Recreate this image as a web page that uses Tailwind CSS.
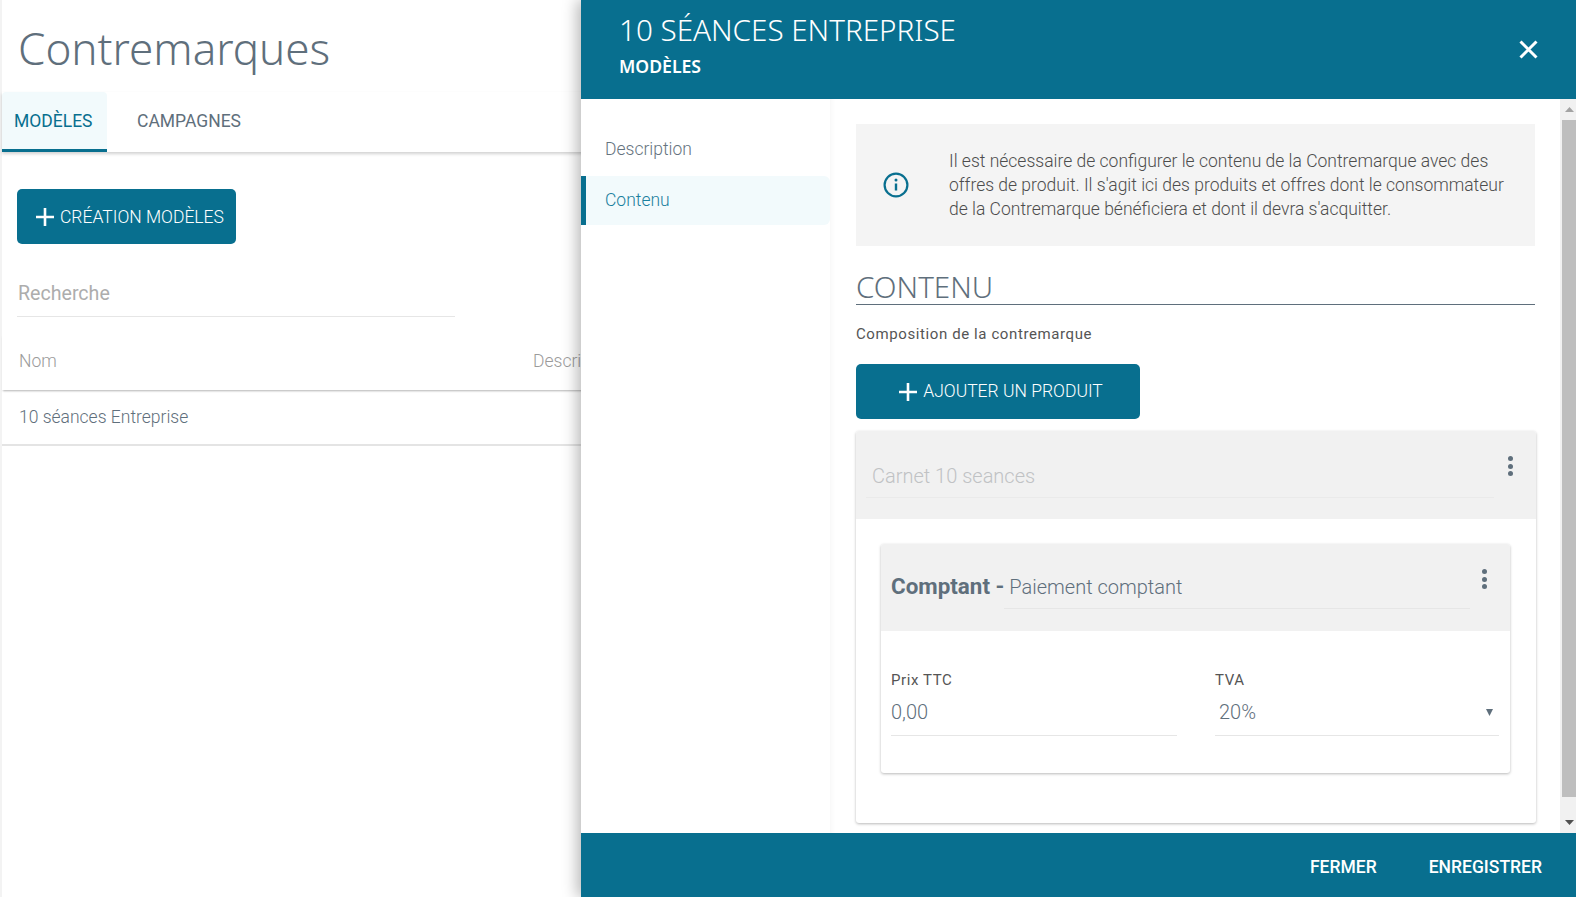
<!DOCTYPE html>
<html lang="fr">
<head>
<meta charset="utf-8"/>
<title>Contremarques</title>
<script src="https://cdn.jsdelivr.net/npm/@tailwindcss/browser@4"></script>
</head>
<body class="h-[897px] overflow-hidden bg-white font-['Roboto',sans-serif]">
<div class="relative h-[897px] w-[1576px] overflow-hidden bg-[#f3f3f3]">
  <!-- page behind the drawer -->
  <main class="ml-[2px] h-full bg-white">
    <h1 class="pl-[16px] pt-[19px] h-[92px] font-['Noto_Sans',sans-serif] font-light text-[44px] leading-[58px] text-[#5f6f7c]">Contremarques</h1>
    <nav class="flex h-[60px] shadow-[0_2px_3px_rgba(0,0,0,0.18)]">
      <a class="flex w-[105px] items-center rounded-t-[4px] border-b-[3px] border-[#086f8f] bg-[#f2fafc] pl-[12px] pt-[1px] text-[17.5px] text-[#086f8f]">MODÈLES</a>
      <a class="flex items-center border-b-[3px] border-transparent pl-[30px] pt-[1px] text-[17.5px] text-[#5f6f7c]">CAMPAGNES</a>
    </nav>
    <div class="pl-[15px] pt-[37px]">
      <button class="flex h-[55px] w-[219px] items-center gap-[6px] rounded-[5px] bg-[#086f8f] pl-[19px] pt-[1px] text-[17.5px] font-light text-white">
        <svg class="h-[18px] w-[18px]" viewBox="0 0 18 18"><path d="M9 0v18M0 9h18" stroke="white" stroke-width="2.6"/></svg>
        <span>CRÉATION MODÈLES</span>
      </button>
      <div class="mt-[33px] h-[40px] w-[438px] border-b border-[#e6e6e6] pl-[1px] pt-[2px] text-[19.6px] leading-[30px] text-[#adadad]">Recherche</div>
    </div>
    <div class="mt-[17px] flex h-[56px] items-center pl-[17px] pb-[1px] text-[17.5px] font-light text-[#9b9b9b] shadow-[0_2px_2px_-1px_rgba(0,0,0,0.3)]">
      <span class="w-[514px]">Nom</span><span>Description</span>
    </div>
    <div class="flex h-[56px] items-center border-b-2 border-[#e4e4e4] pl-[17px] pt-[1px] text-[17.5px] font-light text-[#5f6f7c]">10 séances Entreprise</div>
  </main>

  <!-- drawer -->
  <aside class="absolute inset-y-0 right-0 flex w-[995px] flex-col bg-white shadow-[-4px_0_14px_rgba(0,0,0,0.28)]">
    <header class="relative flex h-[99px] shrink-0 flex-col bg-[#086f8f] pl-[38px] pt-[10px] text-white">
      <div class="font-['Noto_Sans',sans-serif] font-light text-[29.6px] leading-[40px]">10 SÉANCES ENTREPRISE</div>
      <div class="mt-[5px] font-['Noto_Sans',sans-serif] text-[17.6px] font-semibold leading-[22px]">MODÈLES</div>
      <svg class="absolute right-[38px] top-[40px] h-[19px] w-[19px]" viewBox="0 0 19 19"><path d="M1.5 1.5l16 16M17.5 1.5l-16 16" stroke="white" stroke-width="3"/></svg>
    </header>
    <div class="flex min-h-0 flex-1">
      <nav class="w-[249px] shrink-0 pt-[24px] text-[17.5px] font-light">
        <a class="flex h-[53px] items-center pl-[24px] text-[#65737e]">Description</a>
        <a class="flex h-[49px] items-center rounded-r-[6px] border-l-[5px] border-[#086f8f] bg-[#f2fafc] pb-[1px] pl-[19px] text-[#1a7f9e]">Contenu</a>
      </nav>
      <div class="min-w-0 flex-1 pl-[26px] pr-[25px] pt-[25px] shadow-[inset_6px_0_6px_-6px_rgba(0,0,0,0.06)]">
        <div class="flex h-[122px] w-[679px] items-center bg-[#f4f4f4]">
          <svg class="ml-[27px] h-[26px] w-[26px] shrink-0" viewBox="0 0 26 26" fill="none"><circle cx="13" cy="13" r="11.4" stroke="#086f8f" stroke-width="2.2"/><path d="M13 11.5v7" stroke="#086f8f" stroke-width="2.4"/><circle cx="13" cy="8" r="1.5" fill="#086f8f"/></svg>
          <p class="ml-[40px] w-[565px] text-[17.5px] font-light leading-[24px] text-[#4d4d4d]">Il est nécessaire de configurer le contenu de la Contremarque avec des offres de produit. Il s'agit ici des produits et offres dont le consommateur de la Contremarque bénéficiera et dont il devra s'acquitter.</p>
        </div>
        <h2 class="mt-[23px] h-[36px] w-[679px] border-b border-[#5f6f7c] font-['Noto_Sans',sans-serif] font-light text-[29.6px] leading-[36px] text-[#5f6f7c]">CONTENU</h2>
        <p class="mt-[19px] text-[15px] leading-[20px] tracking-[0.6px] text-[#555]">Composition de la contremarque</p>
        <button class="mt-[20px] flex h-[55px] w-[284px] items-center justify-center gap-[6px] rounded-[5px] bg-[#086f8f] pl-[6px] text-[17.5px] font-light text-white">
          <svg class="h-[18px] w-[18px]" viewBox="0 0 18 18"><path d="M9 0v18M0 9h18" stroke="white" stroke-width="2.6"/></svg>
          <span>AJOUTER UN PRODUIT</span>
        </button>
        <section class="mt-[12px] h-[392px] w-[680px] rounded-[3px] bg-white shadow-[0_1px_3px_rgba(0,0,0,0.28)]">
          <div class="relative h-[88px] rounded-t-[3px] bg-[#f1f1f1] pl-[10px] pt-[25px]">
            <div class="h-[42px] w-[628px] border-b border-[#eaeaea] pl-[6px] pt-[4px] text-[20px] font-light leading-[32px] text-[#c0c2c4]">Carnet 10 seances</div>
            <div class="absolute right-[23px] top-[25px] flex flex-col gap-[2.5px]"><i class="h-[5px] w-[5px] rounded-full bg-[#5f6f7c]"></i><i class="h-[5px] w-[5px] rounded-full bg-[#5f6f7c]"></i><i class="h-[5px] w-[5px] rounded-full bg-[#5f6f7c]"></i></div>
          </div>
          <div class="ml-[25px] mt-[25px] h-[229px] w-[629px] rounded-[3px] bg-white shadow-[0_1px_3px_rgba(0,0,0,0.28)]">
            <div class="relative flex h-[87px] rounded-t-[3px] bg-[#f1f1f1] pl-[10px] pt-[24px]">
              <span class="pt-[2px] text-[22.4px] font-bold leading-[32px] text-[#5f6f7c]">Comptant -</span>
              <div class="h-[41px] w-[466px] border-b border-[#e6e6e6] pl-[5px] pt-[3px] text-[20px] font-light leading-[32px] text-[#5f6f7c]">Paiement comptant</div>
              <div class="absolute right-[23px] top-[25px] flex flex-col gap-[2.5px]"><i class="h-[5px] w-[5px] rounded-full bg-[#5f6f7c]"></i><i class="h-[5px] w-[5px] rounded-full bg-[#5f6f7c]"></i><i class="h-[5px] w-[5px] rounded-full bg-[#5f6f7c]"></i></div>
            </div>
            <div class="flex gap-[38px] pl-[10px] pt-[39px]">
              <div class="w-[286px]">
                <div class="text-[15px] leading-[20px] tracking-[0.6px] text-[#555]">Prix TTC</div>
                <div class="h-[46px] border-b border-[#e6e6e6] pt-[8px] text-[20px] font-light leading-[28px] text-[#5f6f7c]">0,00</div>
              </div>
              <div class="w-[284px]">
                <div class="text-[15px] leading-[20px] tracking-[0.6px] text-[#555]">TVA</div>
                <div class="relative h-[46px] border-b border-[#e6e6e6] pl-[4px] pt-[8px] text-[20px] font-light leading-[28px] text-[#5f6f7c]">20%<svg class="absolute right-[6px] top-[19px] h-[7px] w-[7px]" viewBox="0 0 7 7"><path d="M0 0h7L3.5 7z" fill="#5f6f7c"/></svg></div>
              </div>
            </div>
          </div>
        </section>
      </div>
      <!-- scrollbar -->
      <div class="relative w-[16px] shrink-0 bg-[#f1f1f1]">
        <svg class="absolute left-[5px] top-[8px] h-[5px] w-[9px]" viewBox="0 0 9 5"><path d="M4.5 0L9 5H0z" fill="#a3a3a3"/></svg>
        <div class="ml-[2px] mt-[21px] h-[677px] bg-[#bebebe]"></div>
        <svg class="absolute bottom-[8px] left-[5px] h-[5px] w-[9px]" viewBox="0 0 9 5"><path d="M0 0h9L4.5 5z" fill="#505050"/></svg>
      </div>
    </div>
    <footer class="flex h-[64px] shrink-0 items-center justify-end gap-[52px] bg-[#086f8f] pr-[34px] pt-[4px] text-[17.5px] font-medium text-white">
      <span>FERMER</span><span>ENREGISTRER</span>
    </footer>
  </aside>
</div>
</body>
</html>
